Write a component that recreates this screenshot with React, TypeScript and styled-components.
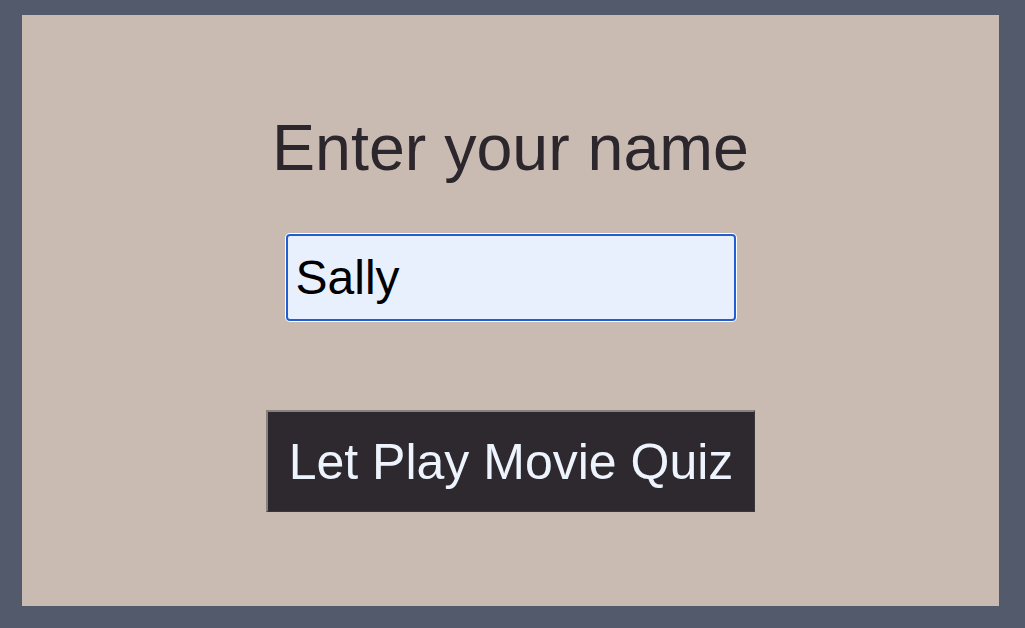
import React, { useState } from "react";
import styled, { createGlobalStyle } from "styled-components";

const GlobalStyle = createGlobalStyle`
  html, body {
    margin: 0;
    padding: 0;
    height: 100%;
  }
  body {
    background: #535a6b;
    font-family: "Liberation Sans", Arial, sans-serif;
  }
  #root {
    height: 100%;
  }
`;

const Page = styled.div`
  box-sizing: border-box;
  height: 100vh;
  padding: 15px 26px 22px 22px;
  display: flex;
`;

const Panel = styled.main`
  flex: 1;
  background: #c9bbb2;
  display: flex;
  flex-direction: column;
  align-items: center;
  padding-top: 101px;
`;

const Heading = styled.h1`
  margin: 0;
  font-size: 64.5px;
  font-weight: 400;
  line-height: 64px;
  color: #2c272d;
`;

const NameInput = styled.input`
  box-sizing: border-box;
  margin-top: 54px;
  width: 450px;
  height: 87px;
  padding: 0 8px;
  border: 2px solid #1f5fcf;
  border-radius: 4px;
  box-shadow: 0 0 0 1px #ffffff;
  background: #e8f0fe;
  font-family: "Liberation Sans", Arial, sans-serif;
  font-size: 48px;
  color: #000;
  caret-color: #000;
  outline: none;
`;

const StartButton = styled.button`
  box-sizing: border-box;
  margin-top: 89px;
  width: 489px;
  height: 102px;
  padding: 0;
  background: #2d292f;
  border-style: solid;
  border-width: 2px 1px 1px 2px;
  border-color: #87827f #3a3639 #3a3639 #87827f;
  color: #eef4fd;
  font-family: "Liberation Sans", Arial, sans-serif;
  font-size: 50px;
  white-space: nowrap;
  cursor: pointer;
`;

export default function App() {
  const [name, setName] = useState("Sally");
  return (
    <>
      <GlobalStyle />
      <Page>
        <Panel>
          <Heading>Enter your name</Heading>
          <NameInput
            autoFocus
            value={name}
            onChange={(e) => setName(e.target.value)}
          />
          <StartButton>Let Play Movie Quiz</StartButton>
        </Panel>
      </Page>
    </>
  );
}
